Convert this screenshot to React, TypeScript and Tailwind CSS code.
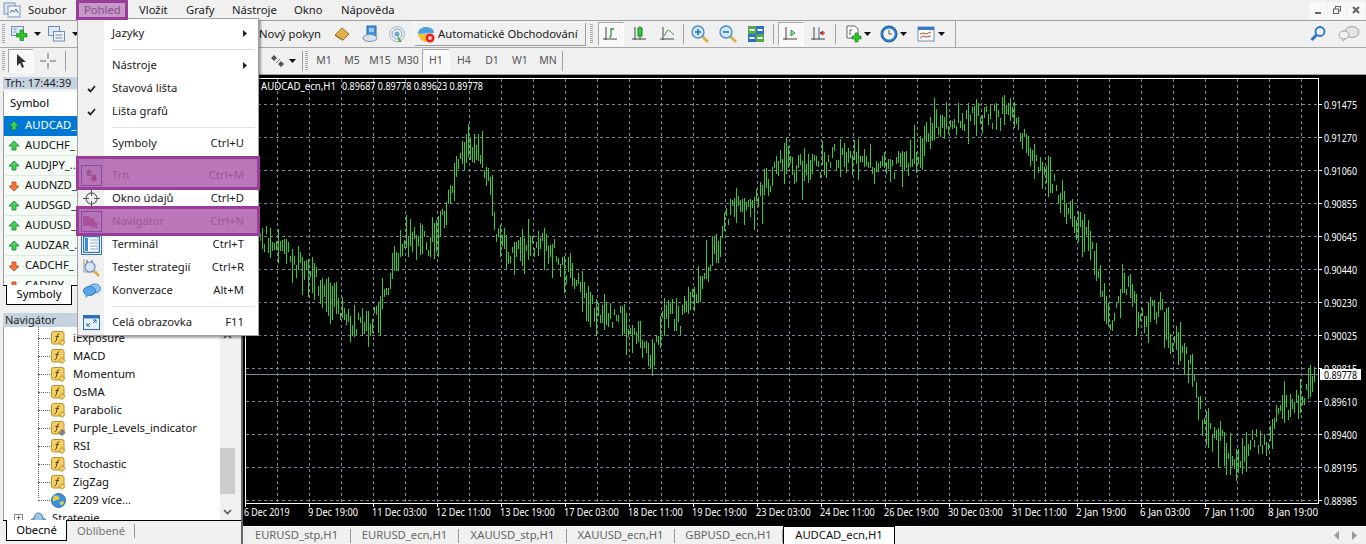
import type { ReactNode } from 'react';

const FONT = 'font-["Noto_Sans",sans-serif]';

// ---- chart data ----
const PATH: [number, number][] = [
  [246, 225], [258, 232], [270, 245], [285, 250], [300, 265], [320, 285], [335, 300], [350, 325], [370, 320], [385, 300],
  [395, 260], [410, 235], [425, 245], [440, 230], [450, 190], [460, 160], [466, 140], [480, 155], [490, 180], [497, 235],
  [510, 250], [530, 250], [545, 245], [560, 260], [580, 290], [600, 315], [620, 320], [635, 330], [650, 358], [665, 310],
  [680, 320], [690, 300], [705, 270], [720, 240], [735, 195], [750, 210], [765, 190], [780, 165], [800, 170], [820, 165],
  [840, 155], [860, 160], [880, 170], [900, 165], [920, 150], [935, 125], [960, 120], [985, 115], [1010, 115], [1025, 140],
  [1040, 165], [1060, 195], [1080, 225], [1095, 260], [1110, 320], [1125, 280], [1140, 320], [1160, 310], [1175, 345], [1190, 365],
  [1205, 430], [1220, 440], [1237, 472], [1255, 440], [1266, 450], [1275, 410], [1295, 403], [1312, 387],
];

const rnd = (i: number) => {
  const v = Math.sin(i * 12.9898) * 43758.5453;
  return v - Math.floor(v);
};

function priceBars() {
  let d = '';
  let seg = 0;
  for (let x = 246; x <= 1314; x += 2) {
    while (seg < PATH.length - 2 && x > PATH[seg + 1][0]) seg++;
    const [x0, y0] = PATH[seg];
    const [x1, y1] = PATH[seg + 1];
    const mid = y0 + ((y1 - y0) * (x - x0)) / (x1 - x0) + (rnd(x) - 0.5) * 22;
    const r = rnd(x + 7);
    const len = 6 + r * r * 36;
    d += `M${x + 0.5} ${Math.round(mid - len / 2)}V${Math.round(mid + len / 2)}`;
  }
  return d;
}

const PRICES = ['0.91475', '0.91270', '0.91060', '0.90855', '0.90645', '0.90440', '0.90230', '0.90025', '0.89815', '0.89610', '0.89400', '0.89195', '0.88985'];
const TIMES = ['6 Dec 2019', '9 Dec 19:00', '11 Dec 03:00', '12 Dec 11:00', '13 Dec 19:00', '17 Dec 03:00', '18 Dec 11:00', '19 Dec 19:00', '23 Dec 03:00', '24 Dec 11:00', '26 Dec 19:00', '30 Dec 03:00', '31 Dec 11:00', '2 Jan 19:00', '6 Jan 03:00', '7 Jan 11:00', '8 Jan 19:00'];

function Chart() {
  const vert = Array.from({ length: 33 }, (_, i) => 277.5 + i * 32);
  return (
    <svg viewBox="243 75 1123 451" className="block h-full w-full bg-black">
      {vert.map((x) => (
        <path key={x} d={`M${x} 79V503`} stroke="#778899" strokeDasharray="3 3" />
      ))}
      {PRICES.map((_, i) => (
        <path key={i} d={`M246 ${104.5 + i * 33}H1318`} stroke="#778899" strokeDasharray="3 3" />
      ))}
      <path d={priceBars()} stroke="#32cd32" fill="none" />
      <path d="M246 374.5H1318" stroke="#778899" />
      <rect x="245.5" y="78.5" width="1073" height="425" fill="none" stroke="#fff" />
      {PRICES.map((p, i) => (
        <g key={p}>
          <path d={`M1318 ${104.5 + i * 33}h4`} stroke="#fff" />
          <text x="1324" y={108.5 + i * 33} fill="#fff" fontSize="11" textLength="33" lengthAdjust="spacingAndGlyphs" className={FONT}>{p}</text>
        </g>
      ))}
      {TIMES.map((t, i) => (
        <g key={t}>
          <path d={`M${245.5 + i * 64} 503v4`} stroke="#fff" />
          <text x={244 + i * 64} y="516" fill="#fff" fontSize="11" textLength={t.length * 4.55} lengthAdjust="spacingAndGlyphs" className={FONT}>{t}</text>
        </g>
      ))}
      <rect x="1320" y="369" width="41" height="11" fill="#fff" />
      <text x="1324" y="378.5" fill="#000" fontSize="11" textLength="33" lengthAdjust="spacingAndGlyphs" className={FONT}>0.89778</text>
      <text x="261" y="90" fill="#fff" fontSize="11" textLength="75" lengthAdjust="spacingAndGlyphs" className={FONT}>AUDCAD_ecn,H1</text>
      <text x="342" y="90" fill="#fff" fontSize="11" textLength="141" lengthAdjust="spacingAndGlyphs" className={FONT}>0.89687 0.89778 0.89623 0.89778</text>
    </svg>
  );
}

// ---- small icons ----
const Caret = () => (
  <svg width="7" height="4" viewBox="0 0 7 4" className="shrink-0"><path d="M0 0h7L3.5 4z" fill="#111" /></svg>
);

const Ic = ({ children, size = 18 }: { children: ReactNode; size?: number }) => (
  <svg width={size} height={size} viewBox="0 0 18 18" className="shrink-0">{children}</svg>
);

const UpArrow = () => (
  <svg width="12" height="12" viewBox="0 0 12 12" className="shrink-0"><path d="M6 1l5 5H8v4H4V6H1z" fill="#3fd25a" stroke="#1f7d35" strokeWidth=".8" /></svg>
);
const DownArrow = () => (
  <svg width="12" height="12" viewBox="0 0 12 12" className="shrink-0"><path d="M6 11l5-5H8V2H4v4H1z" fill="#f4743a" stroke="#b8471b" strokeWidth=".8" /></svg>
);

const FuncIcon = ({ grey = false }: { grey?: boolean }) => (
  <svg width="15" height="15" viewBox="0 0 15 15" className="shrink-0">
    <rect x=".5" y=".5" width="12.5" height="12.5" rx="2" fill="#f5cf62" stroke="#b0902f" />
    <path d="M8.5 3C7 2.6 6.5 3.5 6.2 5L5.3 9.5C5 10.6 4.4 10.8 3.6 10.5M4.5 5.5h3.4" fill="none" stroke="#54430f" strokeWidth="1" />
    <path d="M11 8.5l3 3-3 3-3-3z" fill={grey ? '#8b8b8b' : '#f5cf62'} stroke={grey ? '#666' : '#b0902f'} />
  </svg>
);

const Grip = () => <div className="h-[20px] w-[3px] shrink-0 bg-[repeating-linear-gradient(to_bottom,#a8a8a8_0,#a8a8a8_1px,transparent_1px,transparent_2px)]" />;
const VSep = () => <div className="h-[20px] w-[1px] shrink-0 bg-[#a0a0a0]" />;

const Axes = ({ children }: { children: ReactNode }) => (
  <Ic>
    <path d="M4 2v13M1 14h14" stroke="#444" fill="none" />
    {children}
  </Ic>
);

// ---- menu bar ----
const MENUS: [string, string][] = [
  ['Soubor', 'w-[56px]'], ['Pohled', 'w-[55px]'], ['Vložit', 'w-[47px]'], ['Grafy', 'w-[46px]'], ['Nástroje', 'w-[62px]'], ['Okno', 'w-[47px]'], ['Nápověda', 'w-[70px]'],
];

function MenuBar() {
  return (
    <div className="flex h-[20px] items-center bg-[#f0f0f0] text-[11.25px] text-[#1a1a1a]">
      <svg width="18" height="16" viewBox="0 0 18 16" className="ml-[3px] mr-[7px] shrink-0">
        <rect x="1" y="1" width="11" height="11" fill="#dbe6f3" stroke="#7f95b5" />
        <rect x="5" y="4" width="12" height="11" fill="#eef3fa" stroke="#7f95b5" />
        <path d="M7 11l2-3 2 2 2-3 2 4" fill="none" stroke="#4b6fa8" />
      </svg>
      {MENUS.map(([label, w]) => (
        <div key={label} className={`${w} shrink-0 ${label === 'Pohled' ? 'text-[#7a5a7a]' : ''}`}>{label}</div>
      ))}
      <div className="ml-auto mr-[1px] flex gap-[1px]">
        {['min', 'res', 'cls'].map((k) => (
          <div key={k} className="flex h-[17px] w-[18px] items-center justify-center bg-[#f8f8f8]">
            <svg width="10" height="10" viewBox="0 0 10 10">
              {k === 'min' && <path d="M2 8h6" stroke="#666" strokeWidth="2" />}
              {k === 'res' && <path d="M1.5 4h5v4.5h-5zM3.5 3.5V1.5h5V6H7" fill="none" stroke="#666" strokeWidth="1.1" />}
              {k === 'cls' && <path d="M2 2l6 6M8 2l-6 6" stroke="#666" strokeWidth="2" />}
            </svg>
          </div>
        ))}
      </div>
    </div>
  );
}

// ---- toolbars ----
function ToolbarTop() {
  return (
    <div className="flex h-[26px] items-center bg-[#f0f0f0] text-[11.25px] text-[#1a1a1a]">
      <div className="ml-[2px]"><Grip /></div>
      <div className="ml-[6px] flex w-[30px] items-center gap-[5px]">
        <Ic>
          <rect x=".5" y="1.5" width="12" height="9" fill="#dfe9f5" stroke="#6d8db5" />
          <path d="M2.500 4h3M2.500 7h3" stroke="#6d8db5" />
          <path d="M9 5h3.500v3.500H16V12h-3.500v3.500H9V12H5.500V8.500H9z" fill="#2ec42e" stroke="#178a17" strokeWidth=".7" />
        </Ic>
        <Caret />
      </div>
      <div className="ml-[7px] flex w-[31px] items-center gap-[6px]">
        <Ic>
          <rect x=".5" y="1.5" width="11" height="9" fill="#dfe9f5" stroke="#6d8db5" />
          <rect x="5.500" y="6.500" width="11" height="9.500" fill="#eef3fa" stroke="#6d8db5" />
          <path d="M7.500 10h7M7.500 13h7" stroke="#6d8db5" />
        </Ic>
        <Caret />
      </div>
      <div className="ml-[180px] w-[66px] shrink-0 whitespace-nowrap">Nový pokyn</div>
      <div className="ml-[3px] flex w-[28px] justify-center">
        <Ic>
          <path d="M2 10l7-7 7 6-6 6z" fill="#e2b04c" stroke="#9a7126" />
          <path d="M2 10l8 5v1L2 11z" fill="#8a6a2a" />
        </Ic>
      </div>
      <div className="flex w-[28px] justify-center">
        <Ic>
          <rect x="6" y="1" width="9" height="10" fill="#3f93dc" stroke="#2269a8" />
          <path d="M8 4h5M8 6h5" stroke="#fff" />
          <ellipse cx="9" cy="13" rx="7" ry="3.5" fill="#d7e3ee" stroke="#7d8ea0" />
        </Ic>
      </div>
      <div className="flex w-[26px] justify-center">
        <Ic>
          <circle cx="9" cy="9" r="7.5" fill="none" stroke="#9fb7cb" />
          <circle cx="9" cy="9" r="5" fill="none" stroke="#7fa5c0" />
          <circle cx="9" cy="9" r="2.5" fill="#6aa9d2" />
          <path d="M9 9l2 8h3z" fill="#4aae4a" />
        </Ic>
      </div>
      <div className="ml-[4px] flex h-[24px] w-[172px] shrink-0 items-center gap-[3px] border border-b-[#a0a0a0] border-l-white border-r-[#a0a0a0] border-t-white pl-[2px]">
        <Ic>
          <path d="M1 9c0-5 4-7 8-7s8 2 8 6z" fill="#4aa3e0" />
          <path d="M1 9h11l-3 8C5 17 2 13 1 9z" fill="#f1c232" />
          <circle cx="13" cy="13" r="4.5" fill="#e22" />
          <rect x="11.5" y="11.5" width="3" height="3" fill="#fff" />
        </Ic>
        <span className="whitespace-nowrap">Automatické Obchodování</span>
      </div>
      <div className="ml-[4px]"><Grip /></div>
      <div className="ml-[5px] flex h-[26px] w-[358px] shrink-0 items-center border-r border-[#a8a8a8]">
        <div className="flex h-[24px] w-[26px] items-center justify-center border border-b-white border-l-[#a8a8a8] border-r-white border-t-[#a8a8a8] bg-[#f8f8f8]">
          <Axes><path d="M9 12V4h3" stroke="#1f9a2f" fill="none" strokeWidth="1.3" /><path d="M7 12h2" stroke="#1f9a2f" /></Axes>
        </div>
        <div className="ml-[2px] flex w-[28px] justify-center">
          <Axes><path d="M9 1v14" stroke="#147a20" /><rect x="7" y="3" width="4" height="8" fill="#2ed04a" stroke="#147a20" /></Axes>
        </div>
        <div className="flex w-[28px] justify-center">
          <Axes><path d="M5 11l3-5c2-2 4 1 7 4" stroke="#2f9a3f" fill="none" /></Axes>
        </div>
        <div className="ml-[1px]"><VSep /></div>
        <div className="ml-[2px] flex w-[28px] justify-center">
          <Ic>
            <path d="M11 11l6 6" stroke="#d6b54a" strokeWidth="3" />
            <circle cx="7" cy="7" r="6" fill="#cfe6f8" stroke="#4a90c8" strokeWidth="1.4" />
            <path d="M4 7h6M7 4v6" stroke="#2e73ad" strokeWidth="1.6" />
          </Ic>
        </div>
        <div className="flex w-[28px] justify-center">
          <Ic>
            <path d="M11 11l6 6" stroke="#d6b54a" strokeWidth="3" />
            <circle cx="7" cy="7" r="6" fill="#cfe6f8" stroke="#4a90c8" strokeWidth="1.4" />
            <path d="M4 7h6" stroke="#2e73ad" strokeWidth="1.6" />
          </Ic>
        </div>
        <div className="flex w-[28px] justify-center">
          <Ic>
            <rect x="1" y="1" width="8" height="8" fill="#55a84a" />
            <rect x="9" y="1" width="8" height="8" fill="#2f6fc0" />
            <rect x="1" y="9" width="8" height="8" fill="#2f6fc0" />
            <rect x="9" y="9" width="8" height="8" fill="#55a84a" />
            <path d="M2.5 5h5M10.5 5h5M2.5 13h5M10.5 13h5" stroke="#fff" strokeWidth="2" />
          </Ic>
        </div>
        <div className="ml-[3px]"><VSep /></div>
        <div className="ml-[4px] flex h-[24px] w-[26px] items-center justify-center border border-b-white border-l-[#a8a8a8] border-r-white border-t-[#a8a8a8] bg-[#f8f8f8]">
          <Axes><path d="M9 5l4 3-4 3z" fill="#9be08f" stroke="#2a9a3a" /></Axes>
        </div>
        <div className="ml-[1px] flex w-[28px] justify-center">
          <Axes><path d="M9 2v13" stroke="#2a6fa8" /><path d="M10 8h5M10 8l3-2v4z" stroke="#c8331f" fill="#c8331f" /></Axes>
        </div>
        <div className="ml-[2px]"><VSep /></div>
        <div className="ml-[9px] flex items-center gap-[1px]">
          <Ic>
            <path d="M2 1h8l3 3v9H2z" fill="#fff" stroke="#666" />
            <path d="M5 5v5M5 5h2" stroke="#555" />
            <path d="M10 8h3v3h3v3h-3v3h-3v-3H7v-3h3z" fill="#2ec42e" stroke="#178a17" strokeWidth=".7" />
          </Ic>
          <Caret />
        </div>
        <div className="ml-[9px] flex items-center gap-[2px]">
          <Ic>
            <circle cx="9" cy="9" r="8" fill="#2a7fd0" stroke="#1c5a9a" />
            <circle cx="9" cy="9" r="5.6" fill="#f4f4f4" />
            <path d="M9 5v4h3" stroke="#555" fill="none" />
          </Ic>
          <Caret />
        </div>
        <div className="ml-[10px] flex items-center gap-[3px]">
          <Ic>
            <rect x="1" y="2" width="16" height="14" fill="#fff" stroke="#6d8db5" />
            <rect x="1" y="2" width="16" height="3" fill="#3b78c4" />
            <path d="M3 9l3-1 3 1 5-2M3 13l3-2 3 1 5-1" stroke="#b5532f" fill="none" />
          </Ic>
          <Caret />
        </div>
      </div>
      <div className="ml-auto mr-[11px]">
        <Ic>
          <circle cx="11" cy="6.5" r="4.5" fill="#eaf3fb" stroke="#2a72c8" strokeWidth="1.8" />
          <path d="M7.5 10L2.5 15" stroke="#2a72c8" strokeWidth="3" />
        </Ic>
      </div>
      <div className="mr-[6px]">
        <svg width="22" height="16" viewBox="0 0 22 16">
          <ellipse cx="14" cy="6" rx="7" ry="5.5" fill="#e4e4e4" stroke="#a0a0a0" />
          <ellipse cx="6" cy="9" rx="5" ry="4" fill="#f2f2f2" stroke="#a0a0a0" />
          <path d="M5 13v2l2-2" fill="#f2f2f2" stroke="#a0a0a0" />
        </svg>
      </div>
    </div>
  );
}

const PERIODS = ['M1', 'M5', 'M15', 'M30', 'H1', 'H4', 'D1', 'W1', 'MN'];

function ToolbarPeriods() {
  return (
    <div className="flex h-[26px] items-center bg-[#f0f0f0] text-[10.5px] text-[#555]">
      <div className="ml-[2px]"><Grip /></div>
      <div className="ml-[3px] flex h-[24px] w-[26px] items-center justify-center border border-b-white border-l-[#a8a8a8] border-r-white border-t-[#a8a8a8] bg-[#f8f8f8]">
        <svg width="12" height="16" viewBox="0 0 12 16"><path d="M2 1v12l3-3 2 5 2-1-2-5h4z" fill="#333" /></svg>
      </div>
      <div className="ml-[1px] flex w-[26px] justify-center">
        <svg width="16" height="16" viewBox="0 0 16 16"><path d="M8 0v6M8 10v6M0 8h6M10 8h6" stroke="#666" /></svg>
      </div>
      <div className="ml-[4px]"><VSep /></div>
      <div className="ml-[204px] flex w-[32px] shrink-0 items-center gap-[3px]">
        <svg width="16" height="14" viewBox="0 0 16 14">
          <path d="M4 1l3 3-3 3-3-3zM11 7l3 3-3 3-3-3z" fill="#555" />
          <path d="M6 9l4-4" stroke="#777" />
        </svg>
        <Caret />
      </div>
      <VSep />
      <div className="ml-[2px]"><Grip /></div>
      <div className="ml-[2px] flex items-center">
        {PERIODS.map((p) => (
          <div key={p} className={`flex h-[24px] w-[28px] items-center justify-center ${p === 'H1' ? 'border border-b-white border-l-[#a8a8a8] border-r-white border-t-[#a8a8a8] bg-[#f8f8f8]' : ''}`}>{p}</div>
        ))}
      </div>
      <VSep />
    </div>
  );
}

// ---- left panels ----
const SYMBOLS: [string, boolean][] = [
  ['AUDCAD_', true], ['AUDCHF_', true], ['AUDJPY_...', true], ['AUDNZD_', false], ['AUDSGD_', true], ['AUDUSD_', true], ['AUDZAR_...', true], ['CADCHF_', false], ['CADJPY', false],
];

function MarketWatch() {
  return (
    <div className="flex h-[235px] shrink-0 flex-col pt-[3px]">
      <div className="ml-[3px] h-[12px] bg-[#c5d3e0] pl-[2px] text-[11px] leading-[12px] text-[#222]">Trh: 17:44:39</div>
      <div className="ml-[3px] mt-[2px] h-[194px] shrink-0 overflow-hidden border-l border-[#a0a0a0] bg-white">
        <div className="flex h-[25px] items-center pl-[6px] text-[11.25px]">Symbol</div>
        {SYMBOLS.map(([s, up], i) => (
          <div key={s} className={`flex h-[20px] items-center gap-[5px] border-b pl-[4px] text-[11.25px] ${i === 0 ? 'border-[#0078d7] bg-[#0078d7] text-white' : 'border-[#dfe8df] bg-[#f4fbf4] text-[#111]'}`}>
            {up ? <UpArrow /> : <DownArrow />}
            <span className="whitespace-nowrap">{s}</span>
          </div>
        ))}
      </div>
      <div className="ml-[3px] flex h-[21px] border-t border-black">
        <div className="-mt-px ml-[3px] flex h-[20px] w-[66px] items-center justify-center border border-t-0 border-black bg-white text-[11.25px]">Symboly</div>
      </div>
    </div>
  );
}

const INDICATORS = ['iExposure', 'MACD', 'Momentum', 'OsMA', 'Parabolic', 'Purple_Levels_indicator', 'RSI', 'Stochastic', 'ZigZag'];

function Navigator() {
  return (
    <div className="flex min-h-0 flex-1 flex-col pt-[4px]">
      <div className="ml-[3px] h-[14px] shrink-0 bg-[#c5d3e0] pl-[2px] text-[11px] leading-[14px] text-[#222]">Navigátor</div>
      <div className="ml-[3px] flex h-[193px] shrink-0 overflow-hidden border-l border-[#a0a0a0]">
        <div className="relative w-[216px] shrink-0 overflow-hidden bg-white pt-[2px] text-[11.25px] text-[#111]">
          {INDICATORS.map((n) => (
            <div key={n} className="flex h-[18px] items-center pl-[34px]">
              <div className="mr-[1px] w-[12px] border-t border-dotted border-[#666]" />
              <FuncIcon grey={n.startsWith('Purple')} />
              <span className="ml-[7px] whitespace-nowrap">{n}</span>
            </div>
          ))}
          <div className="flex h-[18px] items-center pl-[34px]">
            <div className="mr-[1px] w-[12px] border-t border-dotted border-[#666]" />
            <svg width="15" height="15" viewBox="0 0 15 15" className="shrink-0">
              <circle cx="7.5" cy="7.5" r="7" fill="#3b93de" stroke="#2b6fb0" />
              <path d="M3 3c2-1 4 0 5 1s0 3-2 3-3 2-4 1 0-4 1-5zM9 9c2-1 4-1 4 0s-2 4-3 3-2-2-1-3z" fill="#e6cf3f" />
            </svg>
            <span className="ml-[7px] whitespace-nowrap">2209 více...</span>
          </div>
          <div className="flex h-[18px] items-center pl-[10px]">
            <div className="flex h-[9px] w-[9px] items-center justify-center border border-[#888] text-[8px] leading-none">+</div>
            <svg width="17" height="15" viewBox="0 0 17 15" className="ml-[7px] shrink-0">
              <ellipse cx="8.5" cy="10" rx="8" ry="3.5" fill="#7fb0d8" stroke="#4c7fa8" />
              <path d="M4 10c0-6 2-8 4.5-8S13 4 13 10z" fill="#9cc5e6" stroke="#4c7fa8" />
            </svg>
            <span className="ml-[5px]">Strategie</span>
          </div>
          <div className="absolute bottom-[22px] left-[34px] top-0 w-0 border-l border-dotted border-[#666]" />
        </div>
        <div className="flex w-[15px] shrink-0 flex-col bg-[#f0f0f0]">
          <div className="flex h-[17px] items-center justify-center">
            <svg width="9" height="6" viewBox="0 0 9 6"><path d="M1 5l3.5-3.5L8 5" stroke="#555" strokeWidth="1.6" fill="none" /></svg>
          </div>
          <div className="mt-[104px] h-[46px] bg-[#cdcdcd]" />
          <div className="mt-auto flex h-[17px] items-center justify-center">
            <svg width="9" height="6" viewBox="0 0 9 6"><path d="M1 1l3.5 3.5L8 1" stroke="#555" strokeWidth="1.6" fill="none" /></svg>
          </div>
        </div>
      </div>
      <div className="ml-[3px] flex h-[21px] shrink-0 items-center border-t border-black text-[11.25px]">
        <div className="-mt-px ml-[3px] flex h-[21px] w-[61px] items-center justify-center border border-t-0 border-black bg-white">Obecné</div>
        <span className="ml-[10px] text-[#777]">Oblíbené</span>
        <div className="ml-[9px] h-[14px] w-px bg-[#999]" />
      </div>
    </div>
  );
}

// ---- chart tabs ----
const TABS = ['EURUSD_stp,H1', 'EURUSD_ecn,H1', 'XAUUSD_stp,H1', 'XAUUSD_ecn,H1', 'GBPUSD_ecn,H1'];

function ChartTabs() {
  return (
    <div className="flex h-[18px] shrink-0 items-center border-t border-white bg-[#f0f0f0] text-[11.25px] text-[#666]">
      {TABS.map((t) => (
        <div key={t} className="flex h-[14px] w-[108px] shrink-0 items-center justify-center border-r border-[#999]">{t}</div>
      ))}
      <div className="-mt-px flex h-[18px] w-[112px] shrink-0 items-center justify-center border-x border-t border-black bg-white text-[#111]">AUDCAD_ecn,H1</div>
      <div className="ml-auto mr-[9px] flex gap-[11px]">
        <svg width="6" height="9" viewBox="0 0 6 9"><path d="M5 0v9L0 4.5z" fill="#999" /></svg>
        <svg width="6" height="9" viewBox="0 0 6 9"><path d="M1 0v9l5-4.5z" fill="#999" /></svg>
      </div>
    </div>
  );
}

// ---- dropdown ----
type Item = { label?: string; key?: string; check?: boolean; sub?: boolean; icon?: ReactNode; off?: boolean };

const Box = ({ children, on }: { children: ReactNode; on?: boolean }) => (
  <div className={`flex h-[21px] w-[21px] items-center justify-center ${on ? 'border border-[#4a6fb0]' : ''}`}>{children}</div>
);

const ITEMS: Item[] = [
  { label: 'Jazyky', sub: true },
  {},
  { label: 'Nástroje', sub: true },
  { label: 'Stavová lišta', check: true },
  { label: 'Lišta grafů', check: true },
  {},
  { label: 'Symboly', key: 'Ctrl+U' },
  {},
  {
    label: 'Trh', key: 'Ctrl+M', off: true,
    icon: <Box on><svg width="15" height="15" viewBox="0 0 15 15"><path d="M5 1l4 4H7v3H3V5H1z" fill="#7a9a7a" /><path d="M10 14l4-4h-2V7H8v3H6z" fill="#c05a6a" /></svg></Box>,
  },
  {
    label: 'Okno údajů', key: 'Ctrl+D',
    icon: <Box><svg width="17" height="17" viewBox="0 0 17 17"><circle cx="8.5" cy="8.5" r="5.5" fill="none" stroke="#777" strokeWidth="1.3" /><path d="M8.5 0v6M8.5 11v6M0 8.5h6M11 8.5h6" stroke="#555" /></svg></Box>,
  },
  {
    label: 'Navigátor', key: 'Ctrl+N', off: true,
    icon: <Box on><svg width="17" height="16" viewBox="0 0 17 16"><path d="M0 2h6l1 2h4v8H0z" fill="#c77aa0" /><path d="M11 5l1.600 3.500 3.900.4-2.900 2.500.9 3.800L11 12.800 7.500 14.800l.9-3.800L5.500 8.900l3.900-.4z" fill="#c77a9a" /></svg></Box>,
  },
  {
    label: 'Terminál', key: 'Ctrl+T',
    icon: <Box on><svg width="17" height="17" viewBox="0 0 17 17"><rect x=".5" y=".5" width="16" height="16" fill="#fff" stroke="#2a78c8" strokeWidth="1.5" /><rect x="2" y="2" width="3" height="13" fill="#3b8ed8" /><path d="M7 4h8M7 7h8M7 10h8M7 13h8" stroke="#8aa0b8" /></svg></Box>,
  },
  {
    label: 'Tester strategií', key: 'Ctrl+R',
    icon: <Box><svg width="19" height="19" viewBox="0 0 19 19"><path d="M2 1v13h13" fill="none" stroke="#999" /><path d="M5 2v4M10 2v4" stroke="#888" strokeWidth="1.5" /><circle cx="8" cy="9" r="5" fill="#d6e6f5" stroke="#6c8fb5" strokeWidth="1.2" /><path d="M12 13l5 5" stroke="#d2b044" strokeWidth="2.5" /></svg></Box>,
  },
  {
    label: 'Konverzace', key: 'Alt+M',
    icon: <Box><svg width="18" height="16" viewBox="0 0 18 16"><ellipse cx="11.5" cy="5.5" rx="6" ry="4.5" fill="#8ec2ee" stroke="#3f88cc" /><ellipse cx="6.5" cy="8" rx="6" ry="4.5" fill="#5aa6e6" stroke="#2f78c0" /><path d="M3 11l-1 4 5-3z" fill="#5aa6e6" /></svg></Box>,
  },
  {},
  {
    label: 'Celá obrazovka', key: 'F11',
    icon: <Box><svg width="17" height="15" viewBox="0 0 17 15"><rect x=".5" y=".5" width="16" height="14" fill="#eaf3fb" stroke="#2a70b8" /><rect x=".5" y=".5" width="16" height="3" fill="#2a70b8" /><path d="M4 11l3-3M4 11h3M4 11V8M13 5l-3 3M13 5h-3M13 5v3" stroke="#2a70b8" fill="none" /></svg></Box>,
  },
];

function ViewMenu() {
  return (
    <div className="absolute left-[77px] top-[18px] z-20 w-[182px] border border-[#a0a0a0] bg-white pb-[1px] pt-[3px] text-[11.25px] text-[#1a1a1a] shadow-[2px_2px_2px_rgba(0,0,0,0.35)]">
      <div className="absolute bottom-0 left-0 top-0 w-[26px] bg-[#f0f0f0]" />
      {ITEMS.map((it, i) =>
        it.label ? (
          <div key={i} className={`relative flex h-[23px] items-center ${it.off ? 'text-[#8d8d8d]' : ''}`}>
            <div className="flex w-[26px] shrink-0 items-center justify-center pl-[1px]">
              {it.check ? (
                <svg width="9" height="8" viewBox="0 0 9 8"><path d="M1 4l2.500 2.500L8 1" fill="none" stroke="#222" strokeWidth="1.8" /></svg>
              ) : (
                it.icon
              )}
            </div>
            <span className="ml-[8px] whitespace-nowrap">{it.label}</span>
            {it.key && <span className="ml-auto mr-[14px]">{it.key}</span>}
            {it.sub && (
              <svg width="4" height="7" viewBox="0 0 4 7" className="ml-auto mr-[11px]"><path d="M0 0l4 3.5L0 7z" fill="#222" /></svg>
            )}
          </div>
        ) : (
          <div key={i} className="relative flex h-[9px] items-center pl-[34px] pr-[3px]"><div className="h-px w-full bg-[#e0e0e0]" /></div>
        ),
      )}
    </div>
  );
}

// ---- purple annotation boxes laid over the screenshot ----
const Mark = ({ className }: { className: string }) => (
  <div className={`absolute z-30 border-[3px] border-[#993d99] bg-[#9c3f9c]/70 ${className}`} />
);

export default function App() {
  return (
    <div className={`relative h-[544px] w-[1366px] overflow-hidden bg-[#f0f0f0] ${FONT}`}>
      <MenuBar />
      <div className="h-px bg-[#a0a0a0]" />
      <ToolbarTop />
      <div className="h-px bg-[#a8a8a8]" />
      <ToolbarPeriods />
      <div className="flex h-[470px]">
        <div className="flex w-[241px] shrink-0 flex-col">
          <MarketWatch />
          <Navigator />
        </div>
        <div className="flex min-w-0 flex-1 flex-col border-l-2 border-t border-[#666] border-t-[#a0a0a0]">
          <div className="min-h-0 flex-1"><Chart /></div>
          <ChartTabs />
        </div>
      </div>
      <ViewMenu />
      <Mark className="left-[76px] top-0 h-[20px] w-[52px] !bg-[#9c3f9c]/50" />
      <Mark className="left-[76px] top-[156px] h-[34px] w-[184px]" />
      <Mark className="left-[76px] top-[206px] h-[30px] w-[184px]" />
    </div>
  );
}
